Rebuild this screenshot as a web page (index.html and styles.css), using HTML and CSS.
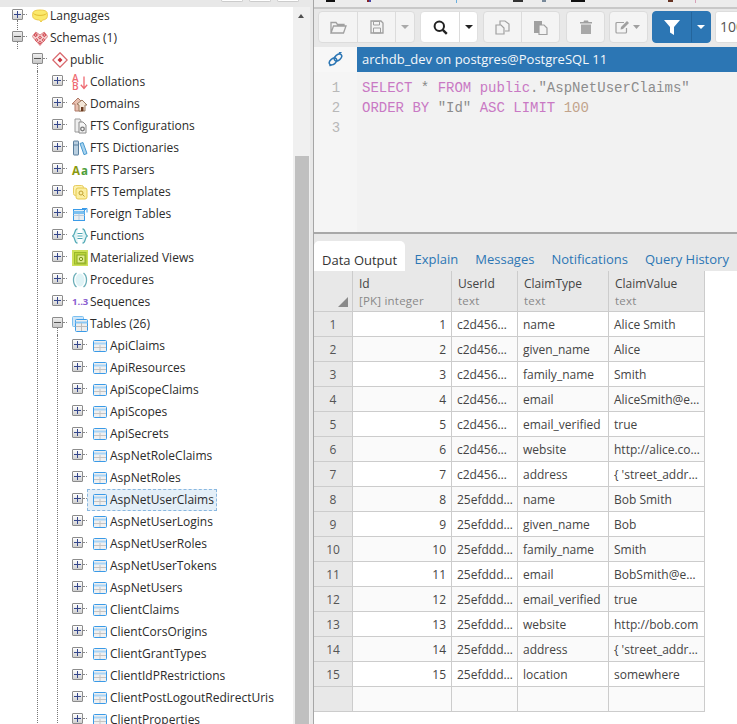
FILE: index.html
```html
<!DOCTYPE html>
<html lang="en">
<head>
<meta charset="utf-8">
<title>pgAdmin Query Tool</title>
<link rel="stylesheet" href="styles.css">
</head>
<body>
<svg class="defs" width="0" height="0" aria-hidden="true">
  <symbol id="i-lang" viewBox="0 0 16 16"><path d="M.7 5.500C.7 3 4 2 8 2s7.300 1 7.300 3.500v3c0 2-2.300 3.500-4.800 3.500l-1.500 2-1.500-2C4 12 .7 10.500.7 8.500z" fill="#fbe96a" stroke="#ecc94a"/><path d="M1.500 5.500c2 2.500 11 2.500 13 0" fill="none" stroke="#e2bc30"/></symbol>
  <symbol id="i-schemas" viewBox="0 0 16 16"><path d="M8 15.500L.3 6.500 3.800 2 8 5l4.200-3 3.500 4.500z" fill="#f6d4d4" stroke="#d66a6e" stroke-width=".8"/><path d="M3.700 2.700l2.300 2.300-2.300 2.300-2.300-2.300zM12.300 2.700l2.300 2.300-2.300 2.300-2.300-2.300zM8 5.500l2 2-2 2-2-2zM4.500 8l2 2-2 2-1.700-2zM11.500 8l1.700 2-1.700 2-2-2zM8 10.500l2 2-2 2.300-2-2.300z" fill="#d14a52"/><path d="M3.700 4.200l.8.800-.8.800-.8-.8zM12.300 4.200l.8.800-.8.800-.8-.8zM8 6.700l.8.800-.8.800-.8-.8zM4.500 9.200l.8.800-.8.800-.8-.8zM11.500 9.200l.8.800-.8.800-.8-.8zM8 11.700l.8.800-.8.800-.8-.8z" fill="#fbe6e6"/></symbol>
  <symbol id="i-public" viewBox="0 0 16 16"><path d="M8 .8L15.200 8 8 15.200.8 8z" fill="#fff" stroke="#d9676c" stroke-width="1.300"/><path d="M8 5.500L10.500 8 8 10.500 5.500 8z" fill="#c8303a"/></symbol>
  <symbol id="i-down" viewBox="0 0 8 16"><path d="M4 2.500V14M.8 10.800L4 14.500l3.200-3.700" fill="none" stroke="#ee6a72" stroke-width="1.300"/></symbol>
  <symbol id="i-dom" viewBox="0 0 16 16"><path d="M0 8l6-6 3 3 1-1 3 4-2 0v7H3V8z" fill="#e8c0b0" stroke="#b07a68"/><path d="M5 8l5-4 5 5h-2v6H7V9z" fill="#f2e6d8" stroke="#9a7a60"/><path d="M9 11h2.500v4H9z" fill="#6a3a20"/></symbol>
  <symbol id="i-conf" viewBox="0 0 16 16"><path d="M3 1h5l1 2v11H3z" fill="#eee" stroke="#9a9a9a"/><path d="M7 4h4l3 3v8H7z" fill="#f5f5f5" stroke="#8a8a8a"/><circle cx="10.500" cy="11" r="1.800" fill="none" stroke="#777" stroke-width="1.300"/></symbol>
  <symbol id="i-dict" viewBox="0 0 16 16"><rect x="1.500" y="1" width="5" height="14" rx=".5" fill="#b9cfe0" stroke="#5a7f9e"/><path d="M8 3.500l3-1 4 11-3 1.200z" fill="#a8d4f0" stroke="#4a9ad0"/><path d="M2 5h4" stroke="#5a7f9e"/></symbol>
  <symbol id="i-tmpl" viewBox="0 0 16 16"><rect x="1.500" y="1.500" width="10" height="10" rx="2" fill="#fdf2b0" stroke="#e6cc60"/><rect x="4" y="4" width="11" height="11" rx="2" fill="#fbeea0" stroke="#e6c94e"/><circle cx="9" cy="9" r="2" fill="none" stroke="#c0a030"/><path d="M10.500 10.500l2 2" stroke="#c0a030"/></symbol>
  <symbol id="i-ftab" viewBox="0 0 16 16"><rect x="1.500" y="3.500" width="11" height="11" fill="#e8eef2" stroke="#3a9be8"/><path d="M1.500 6.500h11" stroke="#7cc0f0" stroke-width="3"/><path d="M1.500 9.500h11M7 8v6" stroke="#bcd"/><path d="M10 2.500h5v4M15 2l-3.500 3.500" fill="none" stroke="#3a9be8"/></symbol>
  <symbol id="i-func" viewBox="0 0 16 16"><path d="M5.500 .8C2 1 3.500 7 .7 8c2.800 1 1.300 7 4.800 7.200M10.500 .8C14 1 12.500 7 15.300 8c-2.800 1-1.300 7-4.800 7.200" fill="#dff2f4" stroke="#4fa8b4" stroke-width="1.200"/><path d="M5.500 5.500h5M5.500 8h5M5.500 10.500h5" stroke="#4fa8b4" stroke-width="1.200"/></symbol>
  <symbol id="i-mat" viewBox="0 0 16 16"><rect x="0" y="0" width="16" height="16" fill="#cde05a"/><rect x="2.500" y="2.500" width="11.500" height="11.500" fill="#bcd63e" stroke="#9ab82a"/><rect x="5" y="5" width="8" height="8" fill="#e0ec90" stroke="#8aa822"/><circle cx="9" cy="9" r="1.700" fill="none" stroke="#7a9818"/></symbol>
  <symbol id="i-proc" viewBox="0 0 16 16"><ellipse cx="8" cy="8" rx="4.500" ry="6.500" fill="#dff3f6"/><path d="M4.500 1C0.500 4 0.500 12 4.500 15" fill="none" stroke="#6aaeb8" stroke-width="1.300"/><path d="M11.500 1c4 3 4 11 0 14" fill="none" stroke="#6aaeb8" stroke-width="1.300"/></symbol>
  <symbol id="i-tabs" viewBox="0 0 16 16"><rect x="0.500" y="0.500" width="11" height="10" rx="1" fill="#cfe6f8" stroke="#7cc0f0"/><rect x="3.500" y="3.500" width="12" height="12" rx="1" fill="#eee" stroke="#3a9be8"/><path d="M3.500 6.500h12" stroke="#8cc8f4" stroke-width="2"/><path d="M3.500 10.500h12M9.500 7v8" stroke="#bbb"/></symbol>
  <symbol id="i-tab" viewBox="0 0 16 16"><rect x="1.500" y="2.500" width="13" height="11" rx="1" fill="#f0f0f0" stroke="#3a9be8"/><path d="M2 5.500h12" stroke="#a8d4f6" stroke-width="2"/><path d="M2 9.500h12M8 7v6" stroke="#c4c4c4"/></symbol>
</svg>
<div class="app">
  <aside class="side">
    <div class="side-top">
      <span class="stub-btn"></span><span class="stub-btn"></span><span class="stub-btn"></span>
    </div>
    <div class="side-body">
      <div class="tree">
        <ul class="list root">
          <li class="first-root">
            <div class="row"><span class="tg plus"></span><span class="node"><svg class="ico"><use href="#i-lang"/></svg><span>Languages</span></span></div>
          </li>
          <li>
            <div class="row"><span class="tg minus"></span><span class="node"><svg class="ico"><use href="#i-schemas"/></svg><span>Schemas (1)</span></span></div>
            <ul class="list kids short">
              <li>
                <div class="row"><span class="tg minus"></span><span class="node"><svg class="ico"><use href="#i-public"/></svg><span>public</span></span></div>
                <ul class="list kids line">
                  <li><div class="row"><span class="tg plus"></span><span class="node"><span class="ico ab"><span class="ab-l">A<br>B</span><svg class="ab-a"><use href="#i-down"/></svg></span><span>Collations</span></span></div></li>
                  <li><div class="row"><span class="tg plus"></span><span class="node"><svg class="ico"><use href="#i-dom"/></svg><span>Domains</span></span></div></li>
                  <li><div class="row"><span class="tg plus"></span><span class="node"><svg class="ico"><use href="#i-conf"/></svg><span>FTS Configurations</span></span></div></li>
                  <li><div class="row"><span class="tg plus"></span><span class="node"><svg class="ico"><use href="#i-dict"/></svg><span>FTS Dictionaries</span></span></div></li>
                  <li><div class="row"><span class="tg plus"></span><span class="node"><span class="ico aa"><span class="aa-1">A</span><span class="aa-2">a</span></span><span>FTS Parsers</span></span></div></li>
                  <li><div class="row"><span class="tg plus"></span><span class="node"><svg class="ico"><use href="#i-tmpl"/></svg><span>FTS Templates</span></span></div></li>
                  <li><div class="row"><span class="tg plus"></span><span class="node"><svg class="ico"><use href="#i-ftab"/></svg><span>Foreign Tables</span></span></div></li>
                  <li><div class="row"><span class="tg plus"></span><span class="node"><svg class="ico"><use href="#i-func"/></svg><span>Functions</span></span></div></li>
                  <li><div class="row"><span class="tg plus"></span><span class="node"><svg class="ico"><use href="#i-mat"/></svg><span>Materialized Views</span></span></div></li>
                  <li><div class="row"><span class="tg plus"></span><span class="node"><svg class="ico"><use href="#i-proc"/></svg><span>Procedures</span></span></div></li>
                  <li><div class="row"><span class="tg plus"></span><span class="node"><span class="ico seq">1..3</span><span>Sequences</span></span></div></li>
                  <li>
                    <div class="row"><span class="tg minus"></span><span class="node"><svg class="ico"><use href="#i-tabs"/></svg><span>Tables (26)</span></span></div>
                    <ul class="list kids line">
                      <li><div class="row"><span class="tg plus"></span><span class="node"><svg class="ico"><use href="#i-tab"/></svg><span>ApiClaims</span></span></div></li>
                      <li><div class="row"><span class="tg plus"></span><span class="node"><svg class="ico"><use href="#i-tab"/></svg><span>ApiResources</span></span></div></li>
                      <li><div class="row"><span class="tg plus"></span><span class="node"><svg class="ico"><use href="#i-tab"/></svg><span>ApiScopeClaims</span></span></div></li>
                      <li><div class="row"><span class="tg plus"></span><span class="node"><svg class="ico"><use href="#i-tab"/></svg><span>ApiScopes</span></span></div></li>
                      <li><div class="row"><span class="tg plus"></span><span class="node"><svg class="ico"><use href="#i-tab"/></svg><span>ApiSecrets</span></span></div></li>
                      <li><div class="row"><span class="tg plus"></span><span class="node"><svg class="ico"><use href="#i-tab"/></svg><span>AspNetRoleClaims</span></span></div></li>
                      <li><div class="row"><span class="tg plus"></span><span class="node"><svg class="ico"><use href="#i-tab"/></svg><span>AspNetRoles</span></span></div></li>
                      <li><div class="row"><span class="tg plus"></span><span class="node selected"><svg class="ico"><use href="#i-tab"/></svg><span>AspNetUserClaims</span></span></div></li>
                      <li><div class="row"><span class="tg plus"></span><span class="node"><svg class="ico"><use href="#i-tab"/></svg><span>AspNetUserLogins</span></span></div></li>
                      <li><div class="row"><span class="tg plus"></span><span class="node"><svg class="ico"><use href="#i-tab"/></svg><span>AspNetUserRoles</span></span></div></li>
                      <li><div class="row"><span class="tg plus"></span><span class="node"><svg class="ico"><use href="#i-tab"/></svg><span>AspNetUserTokens</span></span></div></li>
                      <li><div class="row"><span class="tg plus"></span><span class="node"><svg class="ico"><use href="#i-tab"/></svg><span>AspNetUsers</span></span></div></li>
                      <li><div class="row"><span class="tg plus"></span><span class="node"><svg class="ico"><use href="#i-tab"/></svg><span>ClientClaims</span></span></div></li>
                      <li><div class="row"><span class="tg plus"></span><span class="node"><svg class="ico"><use href="#i-tab"/></svg><span>ClientCorsOrigins</span></span></div></li>
                      <li><div class="row"><span class="tg plus"></span><span class="node"><svg class="ico"><use href="#i-tab"/></svg><span>ClientGrantTypes</span></span></div></li>
                      <li><div class="row"><span class="tg plus"></span><span class="node"><svg class="ico"><use href="#i-tab"/></svg><span>ClientIdPRestrictions</span></span></div></li>
                      <li><div class="row"><span class="tg plus"></span><span class="node"><svg class="ico"><use href="#i-tab"/></svg><span>ClientPostLogoutRedirectUris</span></span></div></li>
                      <li><div class="row"><span class="tg plus"></span><span class="node"><svg class="ico"><use href="#i-tab"/></svg><span>ClientProperties</span></span></div></li>
                    </ul>
                  </li>
                </ul>
              </li>
            </ul>
          </li>
        </ul>
      </div>
      <div class="scrollbar"><span class="sb-arrow"></span><span class="sb-thumb"></span></div>
    </div>
  </aside>
  <div class="divider"></div>
  <main class="main">
    <div class="top-strip">
      <svg class="frag" width="423" height="3" aria-hidden="true"><rect x="12" y="0" width="9" height="2" fill="#111"/><rect x="53" y="0" width="2" height="2" fill="#822"/><rect x="55" y="0" width="2" height="2" fill="#44a"/><rect x="142" y="0" width="1" height="3" fill="#6ab0e0"/><rect x="199" y="0" width="10" height="2" fill="#333"/><rect x="228" y="0" width="4" height="2" fill="#789"/><rect x="257" y="0" width="14" height="2" fill="#111"/><rect x="354" y="0" width="5" height="2" fill="#632"/><rect x="381" y="0" width="1" height="3" fill="#d8a0b8"/></svg>
    </div>
    <div class="toolbar">
      <div class="group">
        <button class="btn w39" aria-label="Open"><svg width="17" height="15" viewBox="0 0 17 15"><path d="M1 13V2.500h5l1.500 2H14V6M1 13l2.500-7H16l-2.500 7z" fill="none" stroke="#a0a0a0" stroke-width="1.300"/></svg></button>
        <button class="btn w38" aria-label="Save"><svg width="14" height="14" viewBox="0 0 14 14"><path d="M1 1h10l2 2v10H1z" fill="none" stroke="#a0a0a0" stroke-width="1.300"/><path d="M3.500 1.500h6v3.500h-6zM3.500 8h7v5h-7z" fill="none" stroke="#a0a0a0"/></svg></button>
        <button class="btn w18" aria-label="Save menu"><span class="caret muted"></span></button>
      </div>
      <div class="group on after5">
        <button class="btn w39" aria-label="Find"><svg width="15" height="15" viewBox="0 0 15 15"><circle cx="6.300" cy="6.300" r="4.700" fill="none" stroke="#222" stroke-width="2"/><path d="M9.800 9.800l4 4" stroke="#222" stroke-width="2.400"/></svg></button>
        <button class="btn w17" aria-label="Find menu"><span class="caret dark"></span></button>
      </div>
      <div class="group after5">
        <button class="btn w38" aria-label="Copy"><svg width="15" height="15" viewBox="0 0 15 15"><path d="M5 5V1h5l4 3v7h-4" fill="none" stroke="#a0a0a0" stroke-width="1.200"/><path d="M1 5h5l3 3v6H1z" fill="#f3f3f3" stroke="#a0a0a0" stroke-width="1.200"/></svg></button>
        <button class="btn w37" aria-label="Paste"><svg width="15" height="15" viewBox="0 0 15 15"><path d="M1 1h8v12H1z" fill="#a0a0a0"/><path d="M6 5h5l3 3v6.500H6z" fill="#f3f3f3" stroke="#a0a0a0" stroke-width="1.200"/></svg></button>
      </div>
      <div class="group after6">
        <button class="btn w37" aria-label="Delete"><svg width="12" height="14" viewBox="0 0 12 14"><path d="M4 .5h4l.5 1.500H12v1.500H0V2h3.500z" fill="#a0a0a0"/><path d="M1 4.500h10V14H1z" fill="#a8a8a8"/></svg></button>
      </div>
      <div class="group">
        <button class="btn w37" aria-label="Edit"><svg width="27" height="14" viewBox="0 0 27 14"><path d="M9 2.500H2a1 1 0 0 0-1 1V12a1 1 0 0 0 1 1h8.500a1 1 0 0 0 1-1V8" fill="none" stroke="#a0a0a0" stroke-width="1.200"/><path d="M5.500 9.500l.5-2.500 6-6 2 2-6 6z" fill="#a0a0a0"/><path d="M18 5h7l-3.500 4z" fill="#a0a0a0"/></svg></button>
      </div>
      <div class="group blue">
        <button class="btn w39" aria-label="Filter"><svg width="16" height="15" viewBox="0 0 16 15"><path d="M0 0h16L10 7v8L6 12.500V7z" fill="#fff"/></svg></button>
        <button class="btn w18" aria-label="Filter menu"><span class="caret white"></span></button>
      </div>
      <span class="limit">100</span>
    </div>
    <div class="conn">
      <div class="conn-icon"><svg width="15" height="15" viewBox="0 0 15 15"><g fill="none" stroke="#2c76b4" stroke-width="1.500"><ellipse cx="5" cy="9.500" rx="4.200" ry="2.700" transform="rotate(-40 5 9.500)"/><ellipse cx="10" cy="5.500" rx="4.200" ry="2.700" transform="rotate(-40 10 5.500)"/><path d="M11 1l2.500-1M1.500 14l2-1.500"/></g></svg></div>
      <div class="conn-title">archdb_dev on postgres@PostgreSQL 11</div>
    </div>
    <div class="editor">
      <div class="gutter"><span>1</span><span>2</span><span>3</span></div>
      <pre class="code"><span class="kw">SELECT</span> <span class="op">*</span> <span class="kw">FROM public</span><span class="str">."AspNetUserClaims"</span>
<span class="kw">ORDER BY</span> <span class="str">"Id"</span> <span class="kw">ASC LIMIT</span> <span class="num">100</span></pre>
    </div>
    <div class="hsplit"></div>
    <div class="tabs">
      <span class="tab active">Data Output</span>
      <span class="tab">Explain</span>
      <span class="tab">Messages</span>
      <span class="tab">Notifications</span>
      <span class="tab">Query History</span>
    </div>
    <div class="grid-wrap">
      <table class="grid">
        <colgroup><col class="c0"><col class="c1"><col class="c2"><col class="c3"><col class="c4"></colgroup>
        <thead>
          <tr>
            <th class="corner"><span class="tri"></span></th>
            <th><span class="h1">Id</span><span class="h2">[PK] integer</span></th>
            <th><span class="h1">UserId</span><span class="h2">text</span></th>
            <th><span class="h1">ClaimType</span><span class="h2">text</span></th>
            <th><span class="h1">ClaimValue</span><span class="h2">text</span></th>
          </tr>
        </thead>
        <tbody>
          <tr><th>1</th><td class="n">1</td><td>c2d456…</td><td>name</td><td>Alice Smith</td></tr>
          <tr><th>2</th><td class="n">2</td><td>c2d456…</td><td>given_name</td><td>Alice</td></tr>
          <tr><th>3</th><td class="n">3</td><td>c2d456…</td><td>family_name</td><td>Smith</td></tr>
          <tr><th>4</th><td class="n">4</td><td>c2d456…</td><td>email</td><td>AliceSmith@e…</td></tr>
          <tr><th>5</th><td class="n">5</td><td>c2d456…</td><td>email_verified</td><td>true</td></tr>
          <tr><th>6</th><td class="n">6</td><td>c2d456…</td><td>website</td><td>http://alice.co…</td></tr>
          <tr><th>7</th><td class="n">7</td><td>c2d456…</td><td>address</td><td>{ 'street_addr…</td></tr>
          <tr><th>8</th><td class="n">8</td><td>25efddd…</td><td>name</td><td>Bob Smith</td></tr>
          <tr><th>9</th><td class="n">9</td><td>25efddd…</td><td>given_name</td><td>Bob</td></tr>
          <tr><th>10</th><td class="n">10</td><td>25efddd…</td><td>family_name</td><td>Smith</td></tr>
          <tr><th>11</th><td class="n">11</td><td>25efddd…</td><td>email</td><td>BobSmith@e…</td></tr>
          <tr><th>12</th><td class="n">12</td><td>25efddd…</td><td>email_verified</td><td>true</td></tr>
          <tr><th>13</th><td class="n">13</td><td>25efddd…</td><td>website</td><td>http://bob.com</td></tr>
          <tr><th>14</th><td class="n">14</td><td>25efddd…</td><td>address</td><td>{ 'street_addr…</td></tr>
          <tr><th>15</th><td class="n">15</td><td>25efddd…</td><td>location</td><td>somewhere</td></tr>
          <tr><th></th><td></td><td></td><td></td><td></td></tr>
        </tbody>
      </table>
    </div>
  </main>
</div>
</body>
</html>
```
FILE: styles.css
```css
* { box-sizing: border-box; }
html, body { margin: 0; padding: 0; height: 100%; overflow: hidden; background: #fff; }
body { font-family: "Open Sans", "Noto Sans", sans-serif; font-size: 12px; color: #333; }
.defs { display: block; height: 0; }

.app { display: flex; width: 737px; height: 724px; overflow: hidden; }

/* left */
.side { width: 310px; height: 724px; display: flex; flex-direction: column; flex: none; }
.side-top { height: 7px; background: #e8e8e8; display: flex; gap: 6px; padding-left: 221px; flex: none; }
.stub-btn { width: 22px; height: 2px; background: #fff; border: 1px solid #ccc; border-top: 0; border-radius: 0 0 3px 3px; }
.side-body { flex: 1; display: flex; min-height: 0; }
.tree { width: 293px; overflow: hidden; flex: none; }
.list { list-style: none; margin: 0; padding: 0; }
.root { margin-top: -2px; padding-left: 12px; }
.first-root { position: relative; }
.first-root::after { content: ""; position: absolute; left: 5px; top: 15px; height: 18px; border-left: 1px dotted #777; }
.kids { position: relative; margin-left: 5px; padding-left: 14px; border-left: 1px solid transparent; }
.kids::before { content: ""; position: absolute; left: -1px; top: -7px; height: 7px; border-left: 1px dotted #777; }
.kids.line { border-left: 1px dotted #777; }
.row { display: flex; height: 22px; align-items: flex-start; white-space: nowrap; }
.tg { position: relative; flex: none; width: 11px; height: 11px; margin-top: 4px; margin-right: 4px; border: 1px solid #8c8c8c; border-radius: 1px; }
.tg::after { content: ""; position: absolute; left: 10px; top: 4px; width: 4px; border-top: 1px dotted #888; }
.tg.plus { background: linear-gradient(#34468c, #34468c) center / 7px 1px no-repeat, linear-gradient(#34468c, #34468c) center / 1px 7px no-repeat, linear-gradient(#fff, #d0d0d0); }
.tg.minus { background: linear-gradient(#555, #555) center / 7px 1px no-repeat, linear-gradient(#eee, #c8c8c8); }
.node { display: flex; align-items: center; height: 22px; padding: 0 3px 2px 5px; color: #2b2b2b; }
.node.selected { background: #e4eff8; outline: 1px dashed #8ab8e0; outline-offset: -1px; }
.ico { width: 16px; height: 16px; flex: none; margin-right: 2px; position: relative; top: 1px; }
.ab { display: flex; }
.ab-l { width: 8px; font-size: 10px; font-weight: 600; line-height: 8px; color: #ee6a72; }
.ab-a { width: 8px; height: 16px; }
.aa { display: flex; align-items: baseline; gap: 1px; padding-top: 1px; font-weight: 700; line-height: 15px; }
.aa-1 { font-size: 11.500px; color: #8a9a10; }
.aa-2 { font-size: 11.500px; color: #4e9e3a; }
.seq { font-size: 9.500px; line-height: 15px; font-weight: 700; color: #8a60d0; white-space: nowrap; }

.scrollbar { width: 17px; flex: none; background: #f0f0f0; display: flex; flex-direction: column; padding-top: 7px; }
.sb-arrow { width: 0; height: 0; margin-left: 5px; border: 3.500px solid transparent; border-top: 0; border-bottom: 4px solid #505050; flex: none; }
.sb-thumb { margin: 138px 1px 0 2px; flex: 1; background: #c0c0c0; }

.divider { width: 4px; flex: none; background: linear-gradient(to right, #e8e8e8 0, #e8e8e8 3px, #a6a6a6 3px); }

/* right */
.main { flex: 1; min-width: 0; height: 724px; display: flex; flex-direction: column; }
.top-strip { height: 9px; background: #ececec; border-bottom: 2px solid #c8c8c8; flex: none; overflow: hidden; }
.frag { display: block; }
.toolbar { height: 38px; background: #e8e8e8; display: flex; gap: 4px; padding: 2px 0 0 4px; flex: none; overflow: hidden; align-items: flex-start; }
.group { display: flex; height: 32px; background: #f4f4f4; border: 1px solid #dcdcdc; border-radius: 4px; flex: none; }
.group.after5 { margin-left: 1px; }
.group.after6 { margin-left: 2px; }
.group.on { background: #fff; border-color: #e0e0e0; }
.group.blue { background: #2c76b4; border-color: #2c76b4; }
.btn { height: 30px; padding: 0; margin: 0; background: transparent; border: 0; border-right: 1px solid #dcdcdc; display: flex; align-items: center; justify-content: center; }
.btn:last-child { border-right: 0; }
.group.blue .btn { border-right-color: #24659c; }
.w37 { width: 37px; } .w38 { width: 38px; } .w39 { width: 39px; } .w17 { width: 17px; } .w18 { width: 18px; }
.caret { width: 0; height: 0; border-style: solid; border-width: 4px 4px 0; border-color: transparent; }
.caret.muted { border-top-color: #aaa; }
.caret.dark { border-top-color: #222; }
.caret.white { border-top-color: #fff; }
.limit { width: 60px; height: 32px; margin-left: 0; background: #fff; border: 1px solid #ddd; border-radius: 3px; padding-left: 4px; line-height: 30px; font-size: 14px; color: #555; flex: none; }

.conn { display: flex; height: 25px; flex: none; }
.conn-icon { width: 43px; background: #f7f7f7; display: flex; align-items: center; justify-content: center; flex: none; }
.conn-title { flex: 1; background: #2c76b4; color: #f4f8fb; font-size: 13px; line-height: 25px; padding-left: 5px; white-space: nowrap; overflow: hidden; }
.editor { height: 160px; display: flex; background: #f2f2f2; flex: none; }
.gutter { width: 43px; flex: none; background: #f5f5f5; padding-top: 6px; display: flex; flex-direction: column; align-items: center; padding-left: 1px; color: #b8b8b8; font: 14px/20px "Liberation Mono", monospace; }
.code { margin: 0; padding: 6px 0 0 5px; font: 14px/20px "Liberation Mono", monospace; color: #888; white-space: pre; }
.kw { color: #c979c4; }
.op { color: #888; }
.str { color: #8c8c8c; }
.num { color: #c2a48c; }
.hsplit { height: 2px; background: #a8a8a8; flex: none; }

.tabs { height: 37px; background: #e8e8e8; display: flex; align-items: flex-end; flex: none; font-size: 13px; white-space: nowrap; }
.tab { color: #2c76b4; height: 30px; padding: 7px 8.500px 0; line-height: 22px; }
.tab.active { background: #fff; color: #333; border-radius: 5px 5px 0 0; padding: 8px 8px 0; width: 91px; margin-right: 1px; }
.grid-wrap { flex: 1; min-height: 0; background: #fff; }
.grid { border-collapse: separate; border-spacing: 0; table-layout: fixed; width: 391px; font-size: 12px; }
.c0 { width: 39px; } .c1 { width: 99px; } .c2 { width: 66px; } .c3 { width: 91px; } .c4 { width: 96px; }
.grid th, .grid td { border-right: 1px solid #ccc; border-bottom: 1px solid #ccc; padding: 0 5px; height: 25px; font-weight: 400; white-space: nowrap; overflow: hidden; color: #444; text-align: left; }
.grid thead th { height: 41px; background: #e8e8e8; padding: 4px 6px 0; vertical-align: top; }
.grid thead th.corner { position: relative; }
.tri { position: absolute; right: 4px; bottom: 4px; width: 0; height: 0; border-style: solid; border-width: 0 0 10px 10px; border-color: transparent transparent #8a8a8a transparent; }
.h1 { display: block; line-height: 18px; color: #444; }
.h2 { display: block; line-height: 15px; font-size: 11.500px; color: #888; letter-spacing: 0.2px; }
.grid tbody th { background: #e8e8e8; text-align: center; color: #555; padding: 0; }
.grid td.n { text-align: right; }
.grid tbody tr:nth-child(even) td { background: #fafafa; }
```
